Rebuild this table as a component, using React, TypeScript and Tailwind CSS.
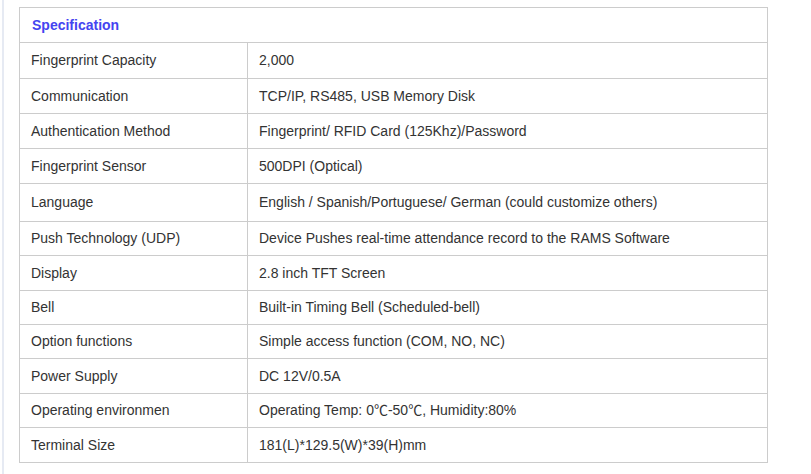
const rows: [string, string, number][] = [
  ["Fingerprint Capacity", "2,000", 36],
  ["Communication", "TCP/IP, RS485, USB Memory Disk", 35],
  ["Authentication Method", "Fingerprint/ RFID Card (125Khz)/Password", 35],
  ["Fingerprint Sensor", "500DPI (Optical)", 35],
  ["Language", "English / Spanish/Portuguese/ German (could customize others)", 38],
  ["Push Technology (UDP)", "Device Pushes real-time attendance record to the RAMS Software", 34],
  ["Display", "2.8 inch TFT Screen", 35],
  ["Bell", "Built-in Timing Bell (Scheduled-bell)", 34],
  ["Option functions", "Simple access function (COM, NO, NC)", 34],
  ["Power Supply", "DC 12V/0.5A", 35],
  ["Operating environmen", "Operating Temp: 0℃-50℃, Humidity:80%", 34],
  ["Terminal Size", "181(L)*129.5(W)*39(H)mm", 35],
];

export default function App() {
  return (
    <div className="flex h-[474px] w-[811px] bg-white font-['Liberation_Sans','Noto_Sans_CJK_SC',Arial,sans-serif] text-[14px] text-[#333]">
      <div className="ml-[2px] w-[2px] bg-[#e6eaf3]" />
      <div className="ml-[15px] pt-[7px]">
        <table className="w-[749px] border-collapse">
          <tbody>
            <tr className="h-[35px]">
              <td colSpan={2} className="border border-[#cccccc] px-[12px] align-middle font-bold text-[#4444f0]">
                Specification
              </td>
            </tr>
            {rows.map(([k, v, h]) => (
              <tr key={k} style={{ height: h }}>
                <td className="w-[228px] border border-[#cccccc] px-[11px] align-middle">{k}</td>
                <td className="border border-[#cccccc] px-[11px] align-middle">{v}</td>
              </tr>
            ))}
          </tbody>
        </table>
      </div>
    </div>
  );
}
